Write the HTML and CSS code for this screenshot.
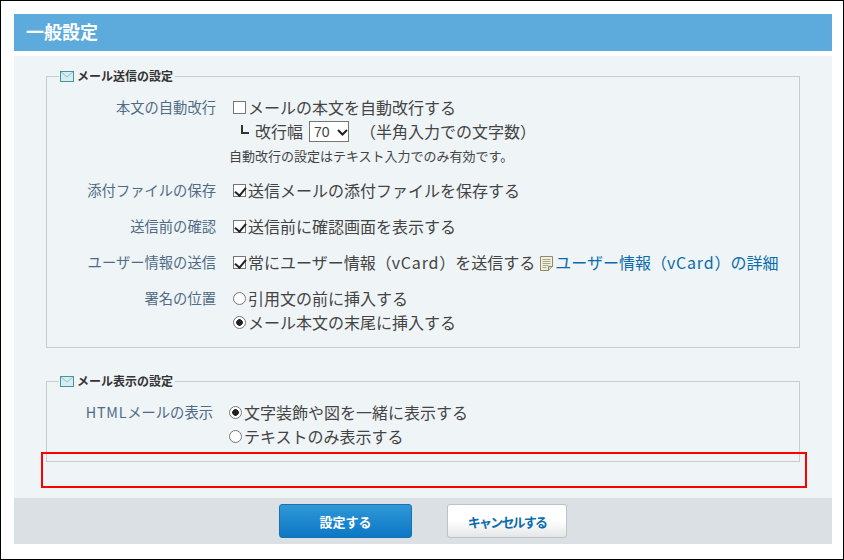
FILE: index.html
```html
<!DOCTYPE html>
<html lang="ja">
<head>
  <meta charset="UTF-8" />
  <title>一般設定</title>
  <link rel="stylesheet" href="styles.css">
</head>
<body>
  <div class="frame">
    <h1 class="page-title">一般設定</h1>

    <form class="panel">
      <fieldset class="group group-send">
        <legend>
          <svg class="mail-icon" viewBox="0 0 14 11"><rect x="0.5" y="0.5" width="13" height="10" fill="#d3edf0" stroke="#4b9299"/><path d="M1 1l6 5 6-5" fill="none" stroke="#8fc4c9"/></svg>
          メール送信の設定
        </legend>

        <div class="row">
          <div class="row-label">本文の自動改行</div>
          <div class="row-value">
            <label class="line"><input type="checkbox">メールの本文を自動改行する</label>
            <div class="line line-width">
              <span class="corner"></span>
              <span class="width-label">改行幅</span>
              <select class="width-select"><option>70</option></select>
              <span class="width-note">（半角入力での文字数）</span>
            </div>
            <div class="hint">自動改行の設定はテキスト入力でのみ有効です。</div>
          </div>
        </div>

        <div class="row">
          <div class="row-label">添付ファイルの保存</div>
          <div class="row-value">
            <label class="line"><input type="checkbox" checked>送信メールの添付ファイルを保存する</label>
          </div>
        </div>

        <div class="row">
          <div class="row-label">送信前の確認</div>
          <div class="row-value">
            <label class="line"><input type="checkbox" checked>送信前に確認画面を表示する</label>
          </div>
        </div>

        <div class="row">
          <div class="row-label">ユーザー情報の送信</div>
          <div class="row-value">
            <div class="line">
              <label class="line"><input type="checkbox" checked><span>常にユーザー情報（<span class="latin">vCard</span>）を送信する</span></label>
              <svg class="memo-icon" viewBox="0 0 13 15"><path d="M0.5 0.5h12v10l-4 4h-8z" fill="#f3efdd" stroke="#8d8a70"/><path d="M2.5 3.5h8M2.5 5.5h8M2.5 7.5h8M2.5 9.5h6M2.5 11.5h4" stroke="#a9a68c"/><path d="M8.5 14.5v-4h4" fill="#d9d5bd" stroke="#8d8a70"/></svg>
              <a class="detail-link" href="#">ユーザー情報（<span class="latin">vCard</span>）の詳細</a>
            </div>
          </div>
        </div>

        <div class="row">
          <div class="row-label">署名の位置</div>
          <div class="row-value">
            <label class="line"><input type="radio" name="sign">引用文の前に挿入する</label>
            <label class="line"><input type="radio" name="sign" checked>メール本文の末尾に挿入する</label>
          </div>
        </div>
      </fieldset>

      <fieldset class="group group-view">
        <legend>
          <svg class="mail-icon" viewBox="0 0 14 11"><rect x="0.5" y="0.5" width="13" height="10" fill="#d3edf0" stroke="#4b9299"/><path d="M1 1l6 5 6-5" fill="none" stroke="#8fc4c9"/></svg>
          メール表示の設定
        </legend>

        <div class="row">
          <div class="row-label"><span class="latin">HTML</span>メールの表示</div>
          <div class="row-value">
            <label class="line"><input type="radio" name="html" checked>文字装飾や図を一緒に表示する</label>
            <label class="line"><input type="radio" name="html">テキストのみ表示する</label>
          </div>
        </div>
      </fieldset>
    </form>

    <div class="actions">
      <button type="button" class="btn btn-primary">設定する</button>
      <button type="button" class="btn btn-cancel">キャンセルする</button>
    </div>

    <div class="highlight"></div>
  </div>
</body>
</html>
```

FILE: styles.css
```css
* {
  box-sizing: border-box;
}

html, body {
  margin: 0;
  padding: 0;
}

body {
  font-family: "Noto Sans CJK JP", "Noto Sans", sans-serif;
  color: #333;
  background: #fff;
}

.frame {
  position: relative;
  width: 844px;
  height: 560px;
  padding: 13px 11px 0 13px;
  border: 1px solid #000;
  overflow: hidden;
}

.page-title {
  margin: 0 0 5px;
  height: 37px;
  padding-left: 12px;
  background: #5dabdc;
  color: #fff;
  font-size: 18px;
  font-weight: 700;
  line-height: 34px;
}

.panel {
  height: 442px;
  padding: 13px 32px 0;
  background: #eff4f7;
}

/* Fieldsets */
.group {
  margin: 0;
  padding: 0;
  min-width: 0;
  border: 1px solid #c8cccf;
}

.group legend {
  display: flex;
  align-items: center;
  margin-left: 12px;
  padding: 0 2px 0 1px;
  height: 14px;
  font-size: 12px;
  font-weight: 700;
  line-height: 14px;
  color: #333;
}

.group-send {
  height: 279px;
  padding-top: 12px;
}

.group-view {
  height: 88px;
  margin-top: 26px;
  padding-top: 12px;
}

.mail-icon {
  width: 14px;
  height: 11px;
  margin-right: 3px;
}

/* Setting rows */
.row {
  display: flex;
  margin-bottom: 12px;
}

.row-label {
  flex: none;
  width: 169px;
  padding-top: 1px;
  text-align: right;
  font-size: 14.3px;
  line-height: 22px;
  color: #4f6b85;
}

.row-value {
  margin-left: 17px;
  font-size: 16px;
  color: #444;
}

.group-view .row-label {
  width: 166px;
}

.group-view .row-value {
  margin-left: 16px;
}

.latin {
  letter-spacing: 0.8px;
}

.line {
  display: flex;
  align-items: center;
  height: 24px;
  line-height: 24px;
  white-space: nowrap;
}

/* Checkboxes and radios are redrawn, the screenshot has the older grey look */
.line input {
  position: relative;
  appearance: none;
  flex: none;
  width: 13px;
  height: 13px;
  margin: 0 2px 0 0;
  background: #fff;
  border: 1px solid #767676;
}

.line input[type="radio"] {
  border-radius: 50%;
}

.line input[type="radio"]:checked {
  background: radial-gradient(circle, #222 0 3px, #fff 3.6px);
}

.line input[type="checkbox"]:checked::after {
  content: "";
  position: absolute;
  left: 3px;
  top: 0;
  width: 5px;
  height: 9px;
  border-right: 2px solid #222;
  border-bottom: 2px solid #222;
  transform: rotate(40deg);
}

.line-width {
  padding-left: 8px;
}

.corner {
  width: 8px;
  height: 9px;
  margin: -3px 6px 0 0;
  border-left: 2px solid #333;
  border-bottom: 2px solid #333;
}

.width-select {
  appearance: none;
  width: 40px;
  height: 21px;
  margin-left: 6px;
  padding: 1px 0 0 4px;
  font-family: "Liberation Sans", sans-serif;
  font-size: 14px;
  color: #444;
  background: #fff url("data:image/svg+xml,%3Csvg xmlns='http://www.w3.org/2000/svg' width='11' height='7'%3E%3Cpath d='M1 1l4.5 4.5L10 1' fill='none' stroke='%23222' stroke-width='2'/%3E%3C/svg%3E") no-repeat 27px 7px;
  border: 1px solid #767676;
}

.width-note {
  margin-left: 11px;
}

.hint {
  margin: 3px 0 0 -4px;
  font-size: 13px;
  line-height: 20px;
}

.memo-icon {
  flex: none;
  width: 13px;
  height: 15px;
  margin: 2px 2px 0 5px;
}

.detail-link {
  color: #0a6cad;
  text-decoration: none;
}

/* Button bar */
.actions {
  display: flex;
  justify-content: center;
  align-items: center;
  gap: 35px;
  height: 46px;
  background: #dae0e4;
}

.btn {
  height: 34px;
  border-radius: 3px;
  font-family: inherit;
  font-size: 13px;
  font-weight: 700;
}

.btn-primary {
  width: 133px;
  border: 1px solid #1a72ad;
  background: linear-gradient(#3098d8, #0c77c4);
  color: #fff;
}

.btn-cancel {
  width: 120px;
  border: 1px solid #b8c4c9;
  background: linear-gradient(#fff 50%, #e4e6e7);
  color: #0a6cad;
  letter-spacing: -1.8px;
}

/* Annotation drawn over the screenshot */
.highlight {
  position: absolute;
  left: 40px;
  top: 451px;
  width: 766px;
  height: 36px;
  border: 2px solid #f00;
}
```
